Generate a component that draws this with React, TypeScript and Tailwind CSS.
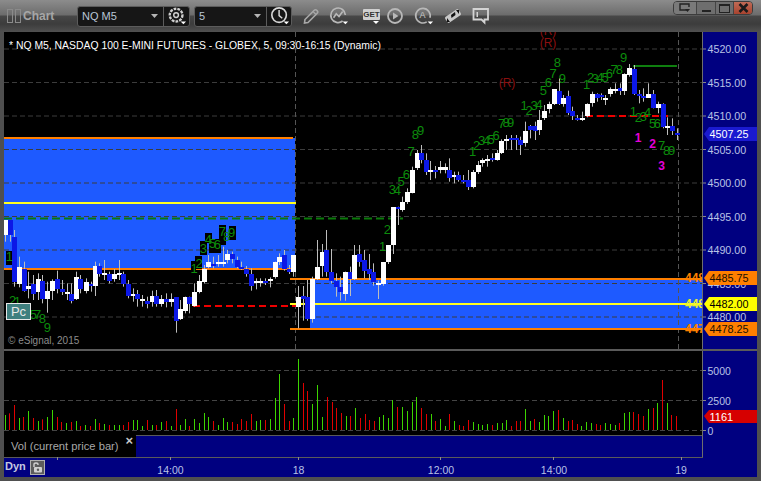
import React from "react";

type Candle = [number, number, number, number, number, "w" | "b"];

// read off the reference at 3x, each block has its own crop origin
const leftCandles: Candle[] = [
  [16,60,105,60,125,"w"],[29,60,105,90,125,"b"],[43,110,245,90,260,"b"],[57,200,252,170,262,"w"],[71,207,272,185,275,"b"],
  [85,258,267,215,295,"w"],[100,252,282,225,300,"b"],[115,237,275,220,300,"w"],[127,243,297,225,310,"b"],[142,272,297,245,338,"w"],
  [157,243,272,238,300,"w"],[172,237,267,212,280,"b"],[185,267,276,240,285,"b"],[200,276,282,250,300,"w"],[214,282,303,250,310,"b"],
  [229,231,297,215,300,"w"],[241,237,267,225,280,"b"],[257,246,273,235,280,"w"],[272,252,258,245,275,"b"],[284,197,258,185,288,"w"],
  [298,197,222,190,230,"b"],[313,219,224,180,240,"w"],[328,222,243,215,250,"b"],[341,222,237,207,245,"w"],[356,219,223,180,240,"w"],
  [370,222,252,215,260,"b"],[385,252,288,240,295,"b"],[398,282,288,265,305,"w"],[412,282,297,270,320,"b"],[427,297,302,285,320,"w"],
  [440,303,312,290,325,"b"],[455,288,306,272,320,"w"],[469,288,312,270,320,"b"],[484,297,312,285,320,"w"],[497,297,306,280,322,"b"],
  [512,297,306,280,320,"w"],[527,291,362,291,398,"b"],[541,327,357,300,360,"w"],[554,291,333,290,340,"w"],[568,291,312,290,340,"b"],
  [583,276,318,250,320,"w"],[596,243,276,225,280,"w"],[611,207,246,195,250,"w"],[625,186,201,165,205,"w"],[640,192,198,170,205,"b"],
  [654,186,192,165,200,"w"],[668,186,192,140,200,"w"],[682,162,180,150,190,"w"],[697,162,178,155,190,"b"],[710,180,201,170,205,"b"],
  [724,201,207,185,210,"b"],[739,207,222,198,230,"b"],[752,222,258,205,272,"b"],[767,243,249,235,268,"w"],[781,243,249,235,260,"w"],
  [796,243,249,235,255,"b"],[809,237,243,232,262,"w"],[824,186,232,185,236,"w"],[838,171,186,160,195,"w"],[853,165,207,150,212,"b"],
  [866,207,216,195,222,"b"],[880,165,216,165,230,"w"],
];
const midCandles: Candle[] = [
  [25,501,530,468,595,"w"],[38,498,507,468,572,"b"],[52,501,568,450,572,"b"],[67,447,567,440,578,"w"],[82,411,447,330,450,"w"],
  [95,366,408,342,440,"w"],[109,360,426,300,440,"b"],[124,426,453,357,460,"b"],[139,453,471,430,500,"b"],[151,471,486,440,512,"b"],
  [166,426,492,425,512,"w"],[181,426,447,410,498,"b"],[193,375,447,345,450,"w"],[208,372,396,345,410,"b"],[223,390,423,360,445,"b"],
  [238,417,432,372,450,"b"],[250,426,456,400,467,"b"],[265,459,465,452,507,"w"],[280,396,462,396,467,"w"],[295,345,396,345,402,"w"],
  [308,231,345,231,372,"w"],[323,231,237,230,285,"b"],[337,216,240,200,245,"w"],[350,186,216,175,222,"w"],[365,120,189,110,190,"w"],
  [380,69,114,60,120,"w"],[394,69,90,45,100,"b"],[407,90,126,70,135,"b"],[421,120,126,93,150,"w"],[436,120,126,108,145,"b"],
  [451,111,120,93,130,"w"],[465,111,120,100,130,"w"],[478,120,144,85,155,"b"],[492,135,141,125,160,"w"],[505,135,150,125,155,"b"],
  [520,150,156,135,160,"b"],[535,150,171,120,180,"b"],[550,126,171,120,175,"w"],[563,105,126,93,132,"w"],[577,90,99,85,110,"w"],
  [592,87,93,75,110,"w"],[606,84,90,70,95,"b"],[620,69,90,60,92,"w"],[634,33,69,28,72,"w"],
];
const rightCandles: Candle[] = [
  [18,297,303,285,330,"w"],[33,294,300,285,330,"b"],[47,294,300,285,330,"b"],[61,300,315,290,345,"b"],[76,273,309,245,320,"w"],
  [89,258,270,255,295,"b"],[104,258,273,245,300,"b"],[118,240,270,210,285,"w"],[133,213,234,195,240,"w"],[147,192,207,185,220,"w"],
  [161,147,192,147,195,"w"],[176,153,192,115,195,"b"],[189,174,192,165,200,"w"],[203,168,219,152,225,"b"],[217,213,228,200,240,"b"],
  [232,234,240,225,242,"b"],[246,234,240,215,243,"w"],[260,192,228,190,232,"w"],[275,162,189,155,200,"w"],[290,162,174,160,185,"b"],
  [303,165,172,160,180,"b"],[316,174,180,165,195,"w"],[331,147,162,142,170,"w"],[345,147,153,130,160,"w"],[359,144,153,130,165,"b"],
  [373,102,153,100,165,"w"],[388,84,106,72,110,"w"],[401,87,162,75,165,"b"],[416,162,168,150,190,"b"],[430,168,174,145,185,"b"],
  [445,162,174,130,170,"w"],[458,162,204,150,205,"b"],[473,192,204,185,220,"w"],[488,192,262,190,265,"b"],[502,258,264,232,285,"w"],
  [515,258,273,235,285,"b"],[530,279,285,265,300,"b"],
];

const shift = (list: Candle[], ox: number, oy: number): Candle[] =>
  list.map(([x, a, b, c, d, k]) => [ox + x / 3, oy + a / 3, oy + b / 3, oy + c / 3, oy + d / 3, k]);

const candles = [...shift(leftCandles, 0, 200), ...shift(midCandles, 290, 130), ...shift(rightCandles, 500, 40)];

type Num = [number, number, string];
const at = (ox: number, oy: number, list: Num[]): Num[] => list.map(([x, y, t]) => [ox + x / 3, oy + y / 3, t]);

const counts: Num[] = [
  ...at(0, 200, [[28,170,"1"],[38,300,"2"],[52,305,"1"],[100,342,"5"],[113,342,"7"],[127,356,"8"],[142,382,"9"],[582,205,"1"],[597,190,"2"],[610,145,"3"],[625,118,"4"],[638,130,"5"],[652,134,"6"],[667,93,"7"],[680,110,"8"],[695,98,"9"]]),
  ...at(290, 130, [[278,350,"1"],[292,298,"2"],[307,178,"3"],[322,180,"4"],[333,155,"5"],[349,133,"6"],[363,65,"7"],[376,12,"8"],[392,0,"9"],[548,65,"1"],[560,45,"2"],[575,32,"3"],[590,30,"4"],[603,28,"5"],[618,15,"6"]]),
  ...at(500, 40, [[5,250,"7"],[18,248,"8"],[32,248,"9"],[72,197,"1"],[87,210,"2"],[102,197,"3"],[117,193,"4"],[130,152,"5"],[145,128,"6"],[159,100,"7"],[172,68,"8"],[187,115,"9"],[260,132,"1"],[272,112,"2"],[285,115,"3"],[300,112,"4"],[315,113,"5"],[328,100,"6"],[342,87,"7"],[358,87,"8"],[371,52,"9"],[400,215,"1"],[415,232,"2"],[430,228,"3"],[443,218,"4"],[458,250,"5"],[472,250,"6"],[485,315,"7"],[500,330,"8"],[515,330,"9"]]),
];

// black boxes behind the counts that sit on the blue zone
const countBacks = [
  [6,251,6,14],[191,261,5,12],[195,256,7,13],[200,241,7,14],[205,233,7,10],[209,239,12,14],[219,225,7,20],[229,226,7,14],
];

const gridY = [49, 82.5, 116, 149.5, 183, 216.5, 250, 283.5, 317];
const labels = ["4520.00","4515.00","4510.00","4505.00","4500.00","4495.00","4490.00","4485.00","4480.00"];

const volLeft: [number, number, string][] = [
  [16,195,"g"],[28,190,"r"],[43,165,"r"],[58,204,"g"],[70,201,"r"],[85,183,"g"],[100,204,"r"],[115,213,"g"],[127,208,"r"],[142,201,"g"],
  [157,180,"g"],[172,201,"r"],[184,216,"r"],[199,219,"g"],[214,216,"r"],[229,213,"g"],[241,228,"r"],[256,225,"g"],[271,228,"r"],[284,207,"g"],
  [298,219,"r"],[313,222,"g"],[328,225,"r"],[341,225,"g"],[356,225,"g"],[370,225,"r"],[385,216,"r"],[398,210,"g"],[412,210,"g"],[427,228,"g"],
  [440,210,"r"],[455,225,"g"],[469,225,"r"],[484,216,"g"],[497,213,"r"],[512,228,"g"],[527,177,"r"],[541,225,"g"],[554,207,"g"],[568,228,"r"],
  [583,207,"g"],[596,219,"g"],[611,189,"g"],[625,201,"g"],[640,213,"r"],[654,225,"g"],[668,204,"g"],[682,216,"g"],[697,216,"r"],[710,222,"r"],
  [724,207,"r"],[739,213,"r"],[752,192,"r"],[767,213,"g"],[781,210,"g"],[796,210,"r"],[809,207,"g"],[824,144,"g"],[838,72,"g"],[853,162,"r"],
  [866,213,"r"],[880,204,"g"],[895,27,"g"],[908,99,"r"],[922,123,"r"],[937,162,"g"],[952,105,"g"],[965,201,"g"],[980,141,"r"],[995,156,"r"],
  [1009,174,"r"],[1022,189,"r"],[1037,198,"g"],[1051,198,"r"],[1064,174,"g"],[1079,204,"r"],[1094,192,"r"],[1108,210,"r"],[1122,213,"r"],[1136,201,"g"],
];
const volRight: [number, number, string][] = [
  [10,195,"g"],[25,204,"g"],[37,150,"g"],[52,171,"r"],[67,171,"g"],[80,183,"g"],[95,156,"g"],[109,141,"g"],[124,174,"r"],[137,192,"r"],
  [152,192,"g"],[166,213,"r"],[181,207,"g"],[194,228,"g"],[208,192,"r"],[223,213,"g"],[236,225,"r"],[250,228,"r"],[265,210,"r"],[280,216,"g"],
  [293,222,"g"],[307,225,"g"],[322,222,"g"],[337,225,"r"],[350,219,"g"],[365,219,"g"],[379,210,"g"],[392,228,"r"],[407,213,"r"],[421,213,"r"],
  [436,177,"g"],[449,213,"g"],[463,207,"r"],[478,216,"g"],[493,195,"g"],[505,198,"g"],[520,183,"g"],[535,180,"r"],[550,204,"g"],[563,213,"r"],
  [577,210,"r"],[592,222,"r"],[604,228,"g"],[619,216,"g"],[634,219,"g"],[649,222,"r"],[661,225,"r"],[676,219,"g"],[691,222,"g"],[706,225,"g"],
  [718,219,"r"],[733,189,"g"],[748,186,"g"],[760,186,"r"],[775,192,"r"],[790,198,"r"],[805,177,"g"],[818,174,"r"],[832,159,"g"],[847,90,"r"],
  [862,159,"g"],[874,195,"r"],[889,198,"r"],
];
const volBars = [
  ...volLeft.map(([x, y, c]) => [Math.round(x / 3), 350 + y / 3, c] as const),
  ...volRight.map(([x, y, c]) => [Math.round(380 + x / 3), 350 + y / 3, c] as const),
];

function PricePlot() {
  return (
    <svg width={698} height={317} viewBox="4 32 698 317" className="block">
      <rect x={4} y={138} width={291} height={130} fill="#1e5aff" />
      <rect x={310} y={279} width={392} height={50} fill="#1e5aff" />
      {gridY.map((y) => (
        <line key={y} x1={4} x2={702} y1={y} y2={y} stroke="#3c3c3c" strokeDasharray="5 3" />
      ))}
      <line x1={295.5} x2={295.5} y1={32} y2={349} stroke="#555" strokeDasharray="5 3" />
      <line x1={678.5} x2={678.5} y1={32} y2={349} stroke="#555" strokeDasharray="5 3" />

      <rect x={4} y={137} width={289} height={2} fill="#ff7f00" />
      <rect x={4} y={202} width={292} height={2} fill="#ffff20" />
      <rect x={4} y={268} width={292} height={2} fill="#ff7f00" />
      <rect x={290} y={278} width={412} height={2} fill="#ff7f00" />
      <rect x={290} y={303} width={20} height={2} fill="#ffff20" />
      <rect x={315} y={303} width={387} height={2} fill="#ffff20" />
      <rect x={290} y={328} width={412} height={2} fill="#ff7f00" />
      <line x1={4} x2={403} y1={218.5} y2={218.5} stroke="#0a7a0a" strokeWidth={2} strokeDasharray="8 4" />
      <line x1={193} x2={296} y1={306} y2={306} stroke="#ee0000" strokeWidth={2} strokeDasharray="7 4" />
      <line x1={586} x2={668} y1={116} y2={116} stroke="#ee0000" strokeWidth={2} strokeDasharray="7 4" />
      <rect x={633} y={65} width={44} height={2} fill="#0f7f0f" />

      {countBacks.map(([x, y, w, h]) => (
        <rect key={`${x}-${y}`} x={x} y={y} width={w} height={h} fill="#000" />
      ))}
      {candles.map(([x, a, b, c, d, k]) => (
        <g key={x}>
          <rect x={Math.round(x)} y={c} width={1} height={d - c} fill="#bdbdbd" />
          <rect x={Math.round(x) - 2} y={Math.round(a)} width={5} height={Math.max(2, Math.round(b - a))} fill={k === "w" ? "#fff" : "#0c18e6"} />
        </g>
      ))}
      {counts.map(([x, y, t]) => (
        <text key={`${x}-${y}`} x={x} y={y} fontSize={13} fill="#0c8c0c" textAnchor="middle" dominantBaseline="central">{t}</text>
      ))}
      <g fontSize={12} fill="#8a0f0f" textAnchor="middle" dominantBaseline="central">
        <text x={507} y={83}>(R)</text>
        <text x={548} y={43}>(R)</text>
        <text x={548} y={31}>(R)</text>
      </g>
      <g fontSize={12} fontWeight={700} fill="#e400d8" textAnchor="middle" dominantBaseline="central">
        <text x={638} y={138}>1</text>
        <text x={652.5} y={144}>2</text>
        <text x={661.5} y={166}>3</text>
      </g>
      <g fontSize={12} fontWeight={700} dominantBaseline="central">
        <text x={685} y={278} fill="#ff8000">4485.75</text>
        <text x={685} y={303.5} fill="#e8f030">4482.00</text>
        <text x={685} y={329} fill="#ff8000">4478.25</text>
      </g>
      <text x={9} y={45} fontSize={10.4} fill="#fff" dominantBaseline="central">* NQ M5, NASDAQ 100 E-MINI FUTURES - GLOBEX, 5, 09:30-16:15 (Dynamic)</text>
      <text x={8} y={340} fontSize={10} fill="#8c8c8c" dominantBaseline="central">© eSignal, 2015</text>
    </svg>
  );
}

function PriceTag({ y, text, bg, fg }: { y: number; text: string; bg: string; fg: string }) {
  return (
    <g>
      <polygon points={`1,${y} 6,${y - 7} 54,${y - 7} 54,${y + 7} 6,${y + 7}`} fill={bg} />
      <text x={6.5} y={y} fontSize={10.8} fill={fg} dominantBaseline="central">{text}</text>
    </g>
  );
}

function PriceAxis() {
  return (
    <svg width={54} height={317} viewBox="0 32 54 317" className="block">
      {gridY.map((y, i) => (
        <g key={y}>
          <line x1={0} x2={3} y1={y} y2={y} stroke="#888" />
          <text x={4.5} y={y} fontSize={10.7} fill="#b9c2e6" dominantBaseline="central">{labels[i]}</text>
        </g>
      ))}
      <PriceTag y={134} text="4507.25" bg="#1a1ad0" fg="#fff" />
      <PriceTag y={278} text="4485.75" bg="#ff7f00" fg="#201000" />
      <PriceTag y={304} text="4482.00" bg="#ffff00" fg="#000" />
      <PriceTag y={329} text="4478.25" bg="#ff7f00" fg="#201000" />
    </svg>
  );
}

function VolumePlot() {
  return (
    <svg width={698} height={84} viewBox="4 351 698 84" className="block">
      {[370.5, 400.5, 430.5].map((y) => (
        <line key={y} x1={4} x2={702} y1={y} y2={y} stroke="#444" strokeDasharray="5 3" />
      ))}
      {volBars.map(([x, y, c]) => (
        <rect key={x} x={x} y={y} width={1} height={430 - y} fill={c === "g" ? "#3cd400" : "#e00000"} />
      ))}
    </svg>
  );
}

function VolumeAxis() {
  return (
    <svg width={54} height={106} viewBox="0 351 54 106" className="block">
      {[[370.5, "5000"], [400.5, "2500"], [430.5, "0"]].map(([y, t]) => (
        <g key={t as string}>
          <line x1={0} x2={3} y1={y as number} y2={y as number} stroke="#888" />
          <text x={4.5} y={y as number} fontSize={10.5} fill="#b9c2e6" dominantBaseline="central">{t}</text>
        </g>
      ))}
      <polygon points="1,416 6,410 54,410 54,423 6,423" fill="#d60000" />
      <text x={6.5} y={416.5} fontSize={11} fill="#fff" dominantBaseline="central">1161</text>
    </svg>
  );
}

function TimeAxis() {
  const ticks = [57, 170, 298, 440, 553, 681];
  const marks: [number, string][] = [[170.5, "14:00"], [298.5, "18"], [441, "12:00"], [554, "14:00"], [681, "19"]];
  return (
    <svg width={753} height={20} viewBox="4 457 753 20" className="absolute left-0 top-0">
      {ticks.map((x) => (
        <rect key={x} x={x} y={457} width={1} height={3} fill="#8a8a8a" />
      ))}
      {marks.map(([x, t]) => (
        <text key={x} x={x} y={469.5} fontSize={10.5} fill="#b9c2e6" textAnchor="middle" dominantBaseline="central">{t}</text>
      ))}
    </svg>
  );
}

function Caret() {
  return <svg width={7} height={4} viewBox="0 0 7 4"><polygon points="0,0 7,0 3.5,4" fill="#b5b5b5" /></svg>;
}

function Corner() {
  return <polygon points="15,17 21,17 18,20" fill="#fff" />;
}

function GearIcon() {
  return (
    <svg width={20} height={20} viewBox="0 0 22 22" fill="none">
      <circle cx={10} cy={10} r={7} stroke="#d0d0d0" strokeWidth={2.6} strokeDasharray="3 1.2" />
      <circle cx={10} cy={10} r={2.6} stroke="#d0d0d0" strokeWidth={1.6} />
      <Corner />
    </svg>
  );
}

function ClockIcon() {
  return (
    <svg width={20} height={20} viewBox="0 0 22 22" fill="none">
      <circle cx={10} cy={10} r={8} stroke="#d8d8d8" strokeWidth={1.8} />
      <path d="M10 4.5V10.5L13.5 13.5" stroke="#d8d8d8" strokeWidth={1.6} />
      <Corner />
    </svg>
  );
}

function PencilIcon() {
  return (
    <svg width={18} height={18} viewBox="0 0 18 18" fill="none">
      <path d="M3 12.5L12 3.5C13 2.5 14 2.5 15 3.5C16 4.5 16 5.5 15 6.5L6 15.5L2.5 16Z" stroke="#a8a8a8" strokeWidth={1.6} />
      <path d="M11 4.5L14 7.5" stroke="#a8a8a8" strokeWidth={1.2} />
    </svg>
  );
}

function TrendIcon() {
  return (
    <svg width={20} height={20} viewBox="0 0 22 22" fill="none">
      <path d="M15 16.5A8 8 0 1 1 18 10" stroke="#b8b8b8" strokeWidth={1.8} />
      <path d="M5 13L8 8.5L11 11.5L15 6" stroke="#b8b8b8" strokeWidth={1.8} />
      <Corner />
    </svg>
  );
}

function GetIcon() {
  return (
    <svg width={18} height={19} viewBox="0 0 18 19" className="block">
      <rect x={0} y={2} width={17} height={11} rx={1} fill="#d0d0d0" />
      <text x={8.5} y={7.8} fontSize={8} fontWeight={700} fill="#333" textAnchor="middle" dominantBaseline="central">GET</text>
      <polygon points="10,14 16,14 13,17" fill="#fff" />
    </svg>
  );
}

function PlayIcon() {
  return (
    <svg width={18} height={18} viewBox="0 0 18 18" fill="none">
      <circle cx={9} cy={9} r={7} stroke="#b8b8b8" strokeWidth={1.8} />
      <polygon points="7,5.5 7,12.5 12.5,9" fill="#b8b8b8" />
    </svg>
  );
}

function AlertIcon() {
  return (
    <svg width={20} height={20} viewBox="0 0 22 22" fill="none">
      <path d="M14 17.5A8 8 0 1 1 17.5 13" stroke="#b8b8b8" strokeWidth={1.8} />
      <text x={9.5} y={10} fontSize={10} fill="#c8c8c8" textAnchor="middle" dominantBaseline="central">A</text>
      <Corner />
    </svg>
  );
}

function DiamondIcon() {
  return (
    <svg width={20} height={18} viewBox="0 0 20 18" fill="none">
      <rect x={2} y={5.5} width={16} height={7} rx={1.5} transform="rotate(-35 10 9)" fill="#c8c8c8" />
      <polygon points="8,8 12,5 12.5,8 8.5,11" fill="#111" />
      <polygon points="13,3 16,3 16,7" fill="#111" />
      <polygon points="4,11 7,15 4,15" fill="#111" />
    </svg>
  );
}

function NoteIcon() {
  return (
    <svg width={18} height={18} viewBox="0 0 18 18" fill="none">
      <path d="M1.5 2H16V12.5H12.5V15.5L9.5 12.5H1.5Z" stroke="#d4d4d4" strokeWidth={1.8} />
      <rect x={4.5} y={5} width={1.5} height={5} fill="#d4d4d4" />
    </svg>
  );
}

function WindowButtons() {
  return (
    <div className="ml-auto mr-[8px] mt-[1px] flex h-[14px] w-[80px] self-start overflow-hidden rounded-[4px] border border-[#3c3c3c]">
      <div className="flex w-[23px] items-center justify-center border-r border-[#444] bg-[#7a7a7a]">
        <svg width={12} height={10} viewBox="0 0 12 10" fill="none">
          <path d="M8 7H1V1H10V4" stroke="#222" strokeWidth={1.4} />
          <polygon points="6,6 11,6 8.5,9" fill="#222" />
        </svg>
      </div>
      <div className="flex w-[19px] items-end justify-center border-r border-[#444] bg-[#6e6e6e] pb-[2px]">
        <div className="h-[2px] w-[9px] bg-[#222]" />
      </div>
      <div className="flex w-[18px] items-center justify-center border-r border-[#444] bg-[#6e6e6e]">
        <div className="h-[9px] w-[11px] border border-t-2 border-[#222]" />
      </div>
      <div className="flex flex-1 items-center justify-center bg-gradient-to-b from-[#c06a55] to-[#a8432f]">
        <svg width={11} height={10} viewBox="0 0 11 10" fill="none">
          <path d="M1.5 1L9.5 9M9.5 1L1.5 9" stroke="#1a1a1a" strokeWidth={2.6} />
        </svg>
      </div>
    </div>
  );
}

export default function App() {
  return (
    <div className="relative flex h-[481px] w-[761px] flex-col overflow-hidden bg-[#4f4f4f] [font-family:'Liberation_Sans',sans-serif]">
      {/* title bar */}
      <div className="flex h-[32px] items-center bg-[linear-gradient(#8c8c8c_0px,#6c6c6c_15px,#474747_16px,#3c3c3c_24px,#505050_32px)]">
        <div className="ml-[7px] h-[14px] w-[6px] border border-[#8a8a8a]" />
        <div className="ml-[2px] h-[14px] w-[6px] border border-[#8a8a8a]" />
        <span className="ml-[2px] w-[31px] text-[12px] font-bold text-[#a6a6a6]">Chart</span>
        <div className="ml-[23px] flex h-[21px] w-[113px] items-stretch rounded-[3px] border border-[#5c5c5c] bg-[#161616]">
          <div className="flex w-[86px] items-center justify-between border-r border-[#5c5c5c] pl-[4px] pr-[5px]">
            <span className="text-[11px] text-[#b9c6d6]">NQ M5</span>
            <Caret />
          </div>
          <div className="flex flex-1 items-center justify-center pl-[1px]"><GearIcon /></div>
        </div>
        <div className="ml-[4px] flex h-[21px] w-[98px] items-stretch rounded-[3px] border border-[#5c5c5c] bg-[#161616]">
          <div className="flex w-[72px] items-center justify-between border-r border-[#5c5c5c] pl-[4px] pr-[5px]">
            <span className="text-[11px] text-[#b9c6d6]">5</span>
            <Caret />
          </div>
          <div className="flex flex-1 items-center justify-center pl-[1px]"><ClockIcon /></div>
        </div>
        <div className="ml-[10px] flex items-center gap-[9px]">
          <PencilIcon />
          <TrendIcon />
          <div className="ml-[5px]"><GetIcon /></div>
          <div className="ml-[-4px]"><PlayIcon /></div>
          <div className="ml-[1px]"><AlertIcon /></div>
          <DiamondIcon />
          <NoteIcon />
        </div>
        <WindowButtons />
      </div>

      {/* chart body */}
      <div className="ml-[4px] flex w-[753px] flex-col">
        <div className="relative flex h-[317px]">
          <div className="w-[698px] bg-black"><PricePlot /></div>
          <div className="w-[1px] bg-[#6e6e6e]" />
          <div className="w-[54px] bg-[#000080]"><PriceAxis /></div>
          <div className="absolute left-[2px] top-[271px] flex h-[17px] w-[25px] items-center justify-center border border-[#e8e8e8] bg-[#3f7f7f] text-[13px] text-[#e8e8e8]">Pc</div>
        </div>
        <div className="h-[2px] bg-[#5a5a5a]" />
        <div className="flex h-[106px]">
          <div className="flex w-[698px] flex-col bg-[#000080]">
            <div className="h-[84px] bg-black"><VolumePlot /></div>
            <div className="flex h-[22px]">
              <div className="relative flex w-[132px] items-center bg-black pl-[7px] text-[11.2px] text-[#a8a8a8]">
                Vol (current price bar)
                <span className="absolute right-[3px] top-[-1px] text-[13px] font-bold leading-[14px] text-[#c8c8c8]">×</span>
              </div>
              <div className="flex-1 border-t border-[#5a5a5a]" />
            </div>
          </div>
          <div className="w-[1px] bg-[#6e6e6e]" />
          <div className="w-[54px] bg-[#000080]"><VolumeAxis /></div>
        </div>
        <div className="relative flex h-[20px] items-center bg-[#000080]">
          <div className="absolute left-0 top-0 h-[1px] w-[699px] bg-[#5a5a5a]" />
          <TimeAxis />
          <span className="mb-[1px] ml-[1px] text-[11px] font-bold text-[#c4c8e0]">Dyn</span>
          <div className="ml-[4px] flex h-[15px] w-[15px] items-center justify-center border border-[#b0b0b0] bg-[#5c5c5c]">
            <svg width={11} height={12} viewBox="0 0 11 12" fill="none">
              <path d="M2 6V3.5C2 1.5 6 1.5 6 3.5V4" stroke="#d0d0d0" strokeWidth={1.4} />
              <rect x={2} y={6} width={8} height={5.5} rx={1} fill="#d0d0d0" />
              <circle cx={6} cy={8.7} r={1.2} fill="#5c5c5c" />
            </svg>
          </div>
        </div>
      </div>
    </div>
  );
}
